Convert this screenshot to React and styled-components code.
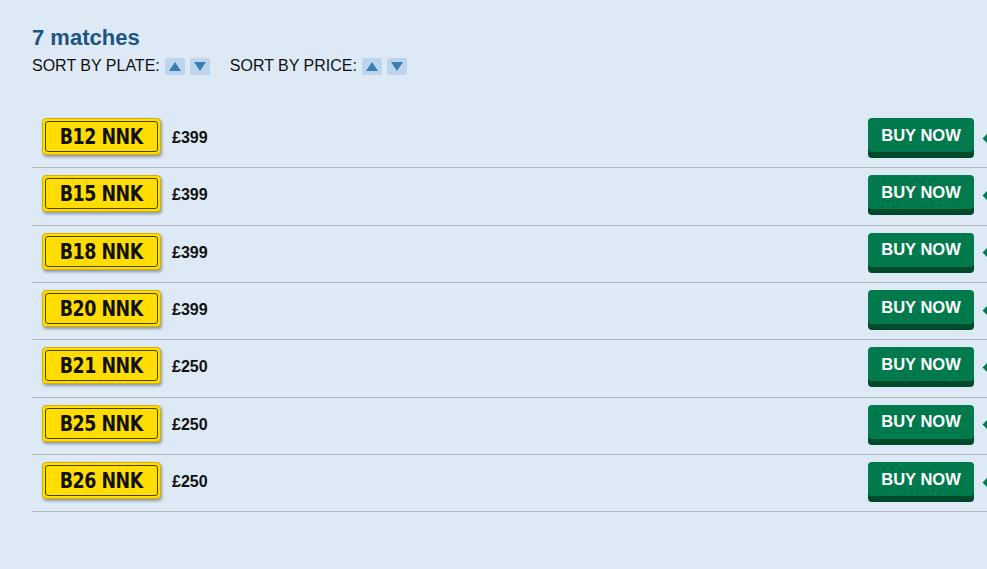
import React from "react";
import styled, { createGlobalStyle } from "styled-components";

const plates = [
  { reg: "B12 NNK", price: "£399" },
  { reg: "B15 NNK", price: "£399" },
  { reg: "B18 NNK", price: "£399" },
  { reg: "B20 NNK", price: "£399" },
  { reg: "B21 NNK", price: "£250" },
  { reg: "B25 NNK", price: "£250" },
  { reg: "B26 NNK", price: "£250" },
];

function SortGroup({ label }) {
  return (
    <SortItem>
      <span>{label}</span>
      <SortButton aria-label="ascending">
        <Tri $dir="up" />
      </SortButton>
      <SortButton aria-label="descending">
        <Tri $dir="down" />
      </SortButton>
    </SortItem>
  );
}

function App() {
  return (
    <>
      <GlobalStyle />
      <Page>
        <Title>7 matches</Title>
        <SortBar>
          <SortGroup label="SORT BY PLATE:" />
          <SortGroup label="SORT BY PRICE:" />
        </SortBar>

        <List>
          {plates.map((p) => (
            <Row key={p.reg}>
              <Plate>
                <Inner>
                  <span>{p.reg}</span>
                </Inner>
              </Plate>
              <Price>{p.price}</Price>
              <BuyButton>BUY NOW</BuyButton>
              <Marker />
            </Row>
          ))}
        </List>
      </Page>
    </>
  );
}

export default App;

const GlobalStyle = createGlobalStyle`
  html, body {
    margin: 0;
    padding: 0;
    background: #dde9f4;
    overflow: hidden;
  }
  body {
    font-family: "Liberation Sans", Arial, sans-serif;
  }
`;

const Page = styled.div`
  padding: 26px 0 0 32px;
  width: 1000px;
  min-height: 569px;
  box-sizing: border-box;
`;

const Title = styled.h1`
  margin: 0;
  font-size: 22px;
  font-weight: bold;
  color: #1d5582;
  line-height: 24px;
`;

const SortBar = styled.div`
  display: flex;
  align-items: center;
  gap: 20px;
  margin-top: 7px;
`;

const SortItem = styled.div`
  display: flex;
  align-items: center;
  gap: 5px;
  font-size: 16px;
  color: #111;
`;

const SortButton = styled.button`
  width: 20px;
  height: 17px;
  padding: 0;
  border: none;
  border-radius: 2px;
  background: #bcd5ec;
  display: flex;
  align-items: center;
  justify-content: center;
  cursor: pointer;
`;

const Tri = styled.i`
  width: 0;
  height: 0;
  border-left: 6px solid transparent;
  border-right: 6px solid transparent;
  ${(p) =>
    p.$dir === "up"
      ? "border-bottom: 9px solid #3a7db4;"
      : "border-top: 9px solid #3a7db4;"}
`;

const List = styled.div`
  margin-top: 36px;
  width: 970px;
`;

const Row = styled.div`
  display: flex;
  align-items: center;
  height: 56.33px;
  box-sizing: content-box;
  padding: 0 0 0 10px;
  border-bottom: 1px solid #aeb6be;
`;

const Plate = styled.div`
  width: 119px;
  height: 37px;
  margin-bottom: 5px;
  box-sizing: border-box;
  background: #ffdd00;
  border: 1px solid #d9b000;
  border-radius: 4px;
  padding: 2px;
  box-shadow: 1px 2px 3px rgba(0, 0, 0, 0.35);
`;

const Inner = styled.div`
  display: flex;
  align-items: center;
  justify-content: center;
  height: 100%;
  box-sizing: border-box;
  border: 1px solid #4a4000;
  border-radius: 3px;

  span {
    display: inline-block;
    font-family: "DejaVu Sans", sans-serif;
    font-stretch: condensed;
    font-weight: bold;
    font-size: 22px;
    letter-spacing: -0.5px;
    color: #111;
    transform: scaleX(0.88);
  }
`;

const Price = styled.div`
  margin-left: 11px;
  margin-bottom: 2px;
  font-size: 16px;
  font-weight: bold;
  color: #111;
  flex: 1;
`;

const BuyButton = styled.button`
  width: 106px;
  height: 34px;
  margin-top: -8px;
  border: none;
  border-radius: 4px;
  background: #007a4d;
  box-shadow: 0 6px 0 #004a2c;
  color: #fff;
  font-family: "Liberation Sans", Arial, sans-serif;
  font-weight: bold;
  font-size: 16.5px;
  cursor: pointer;
`;

const Marker = styled.span`
  width: 7px;
  height: 7px;
  margin-left: 10px;
  margin-right: 11px;
  margin-bottom: 2px;
  background: #007a4d;
  transform: rotate(45deg);
`;
